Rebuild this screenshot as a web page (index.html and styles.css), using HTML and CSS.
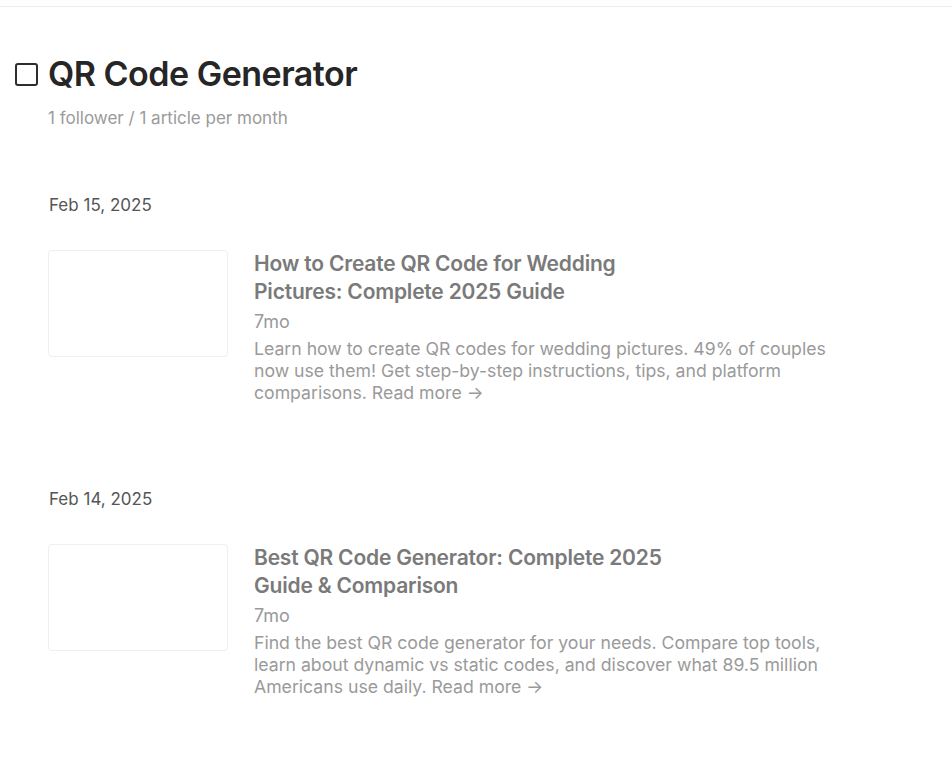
FILE: index.html
```html
<!DOCTYPE html>
<html>
<head>
<meta charset="utf-8">
<link rel="stylesheet" href="styles.css">
</head>
<body>
<div class="topbar"></div>
<header class="head">
  <div class="title-row">
    <span class="logo"></span>
    <h1 class="title">QR Code Generator</h1>
  </div>
  <div class="sub">1 follower / 1 article per month</div>
</header>
<main class="feed">
  <section class="day">
    <div class="date">Feb 15, 2025</div>
    <article class="post">
      <div class="thumb"></div>
      <div class="body">
        <h2 class="ptitle">How to Create QR Code for Wedding Pictures: Complete 2025 Guide</h2>
        <div class="age">7mo</div>
        <p class="desc">Learn how to create QR codes for wedding pictures. 49% of couples now use them! Get step-by-step instructions, tips, and platform comparisons. Read more →</p>
      </div>
    </article>
  </section>
  <section class="day">
    <div class="date">Feb 14, 2025</div>
    <article class="post">
      <div class="thumb"></div>
      <div class="body">
        <h2 class="ptitle">Best QR Code Generator: Complete 2025 Guide &amp; Comparison</h2>
        <div class="age">7mo</div>
        <p class="desc">Find the best QR code generator for your needs. Compare top tools, learn about dynamic vs static codes, and discover what 89.5 million Americans use daily. Read more →</p>
      </div>
    </article>
  </section>
</main>
</body>
</html>
```
FILE: styles.css
```css
html, body {
  margin: 0;
  padding: 0;
  background: #ffffff;
  font-family: Inter, "Liberation Sans", sans-serif;
}
.topbar {
  height: 6px;
  border-bottom: 1px solid #ececec;
}
.head {
  padding: 47px 0 0 15px;
}
.title-row {
  display: flex;
  align-items: center;
  gap: 10px;
}
.logo {
  width: 19px;
  height: 19px;
  border: 2px solid #2e2e2e;
  border-radius: 3px;
  flex: none;
}
.title {
  margin: 0;
  font-size: 34px;
  line-height: 40px;
  font-weight: 600;
  color: #262626;
  letter-spacing: -0.5px;
}
.sub {
  margin: 14px 0 0 33px;
  font-size: 17px;
  line-height: 20px;
  color: #9a9a9a;
}
.feed {
  padding: 65px 0 0 48px;
}
.day {
  margin-bottom: 83px;
}
.date {
  font-size: 17px;
  line-height: 24px;
  color: #555555;
  padding-left: 1px;
}
.post {
  display: flex;
  gap: 26px;
  margin-top: 31px;
}
.thumb {
  width: 178px;
  height: 105px;
  border: 1px solid #efefef;
  border-radius: 4px;
  flex: none;
  margin-top: 2px;
}
.body {
  width: 600px;
  padding-top: 2px;
}
.ptitle {
  margin: 0;
  max-width: 430px;
  font-size: 21px;
  line-height: 28px;
  font-weight: 600;
  color: #7a7a7a;
  letter-spacing: -0.2px;
}
.age {
  margin-top: 1px;
  font-size: 18px;
  line-height: 30px;
  color: #999999;
}
.desc {
  margin: 1px 0 0;
  font-size: 17.65px;
  line-height: 22px;
  color: #9a9a9a;
}
```
